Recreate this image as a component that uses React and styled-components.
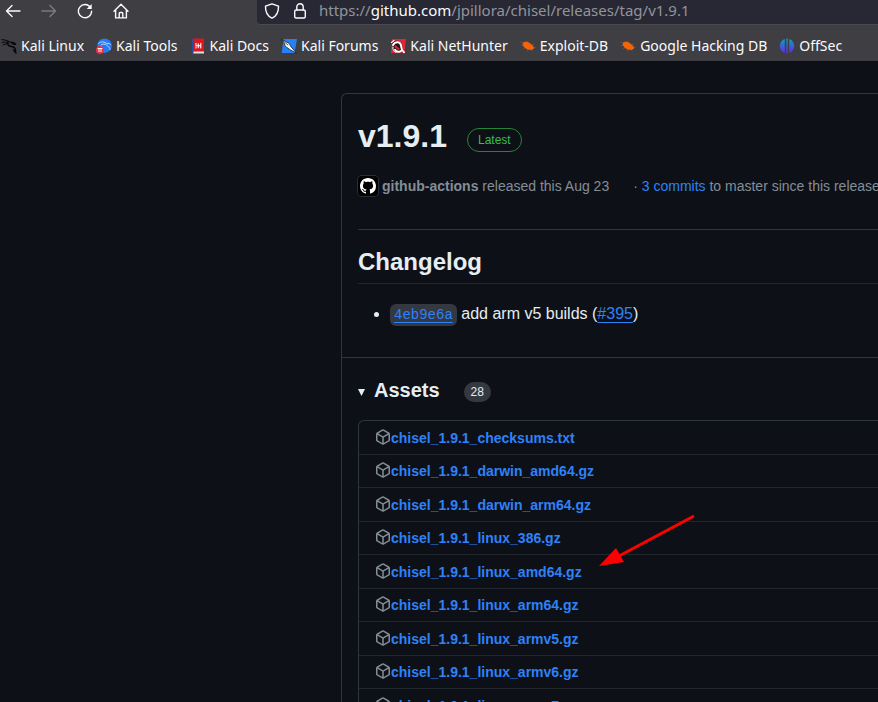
import React from "react";
import styled, { createGlobalStyle } from "styled-components";

const color = {
  chrome: "#3e3e43",
  urlBar: "#272834",
  page: "#0d1117",
  border: "#30363d",
  borderMuted: "#21262d",
  text: "#e6edf3",
  muted: "#848d97",
  link: "#2f81f7",
  green: "#3fb950",
};

const GlobalStyle = createGlobalStyle`
  * { box-sizing: border-box; }
  html, body { margin: 0; background: ${color.page}; }
  body { overflow: hidden; }
  a { color: inherit; text-decoration: none; }
  button { font: inherit; color: inherit; background: none; border: 0; padding: 0; }
  h1, h2, h3, p, ul { margin: 0; padding: 0; }
`;

const Window = styled.div`
  display: flex;
  flex-direction: column;
  height: 100vh;
  overflow: hidden;
  color: ${color.text};
  font-family: "Liberation Sans", Arial, sans-serif;
`;

const Chrome = styled.header`
  flex: none;
  background: ${color.chrome};
  color: #fbfbfe;
  font-family: "Noto Sans", sans-serif;
  font-size: 15px;
  line-height: 20px;
  border-bottom: 1px solid #0b0b10;
`;

const Toolbar = styled.div`
  display: flex;
  height: 25px;
`;

const NavButtons = styled.nav`
  display: flex;
  flex: none;
  width: 257px;
  gap: 18px;
  padding-left: 4px;
`;

const NavButton = styled.button`
  display: grid;
  place-items: center;
  width: 18px;
  height: 22px;
  color: ${(p) => (p.disabled ? "#7c7c80" : "#fbfbfe")};
`;

const UrlBar = styled.div`
  display: flex;
  flex: 1;
  align-items: flex-start;
  gap: 10px;
  padding-left: 6px;
  min-width: 0;
  background: ${color.urlBar};
  border-bottom: 1px solid #4a4a50;
  border-bottom-left-radius: 4px;
`;

const UrlIcon = styled.span`
  display: grid;
  place-items: center;
  width: 18px;
  height: 21px;
`;

const Url = styled.div`
  font-size: 15px;
  white-space: nowrap;
  color: #93949b;
`;

const Host = styled.span`
  color: #fbfbfe;
`;

const Bookmarks = styled.nav`
  display: flex;
  gap: 12px;
  padding: 11px 0 5px 1px;
  white-space: nowrap;
`;

const Bookmark = styled.a`
  display: flex;
  align-items: center;
  gap: 4px;
  font-size: 14px;
`;

const Page = styled.main`
  flex: 1;
  min-height: 0;
  padding: 31px 0 0 341px;
`;

const Release = styled.section`
  border: 1px solid ${color.border};
  border-right: 0;
  border-top-left-radius: 6px;
  white-space: nowrap;
`;

const ReleaseBody = styled.div`
  padding: 18px 0 30px 16px;
`;

const TitleRow = styled.div`
  display: flex;
  align-items: center;
  gap: 20px;
`;

const Title = styled.h1`
  font-size: 32px;
  line-height: 48px;
`;

const Latest = styled.span`
  margin-top: 8px;
  padding: 0 10px;
  border: 1px solid #238636;
  border-radius: 12px;
  color: ${color.green};
  font-size: 12px;
  line-height: 22px;
`;

const Meta = styled.div`
  display: flex;
  align-items: center;
  gap: 24px;
  padding: 14px 0 31px;
  border-bottom: 1px solid ${color.border};
  color: ${color.muted};
  font-size: 14px;
  line-height: 24px;
`;

const Author = styled.div`
  display: flex;
  align-items: center;
  gap: 4px;
`;

const AuthorLink = styled.a`
  font-weight: 700;
`;

const Avatar = styled.svg`
  display: block;
  width: 20px;
  height: 20px;
  border-radius: 4px;
  box-shadow: 0 0 0 1px #2b2e33;
`;

const TextLink = styled.a`
  color: ${color.link};
  text-decoration: ${(p) => (p.$underline ? "underline" : "none")};
  text-underline-offset: 3px;
`;

const Heading = styled.h2`
  margin-top: 16px;
  padding-bottom: 6px;
  border-bottom: 1px solid ${color.borderMuted};
  font-size: 24px;
  line-height: 31px;
`;

const Changes = styled.ul`
  margin-top: 18px;
  padding-left: 32px;
  font-size: 16px;
  line-height: 24px;
`;

const Commit = styled.code`
  padding: 3px 4px;
  border-radius: 6px;
  background: #343941;
  font-family: "Liberation Mono", monospace;
  font-size: 14px;
`;

const Assets = styled.section`
  padding: 19px 0 0 16px;
  border-top: 1px solid ${color.border};
`;

const AssetsSummary = styled.button`
  display: flex;
  align-items: center;
  color: ${color.text};
`;

const Caret = styled.svg`
  width: 7px;
  height: 7px;
  margin-top: 5px;
  margin-right: 9px;
`;

const AssetsTitle = styled.h3`
  font-size: 20px;
  line-height: 26px;
`;

const Counter = styled.span`
  margin-top: 3px;
  margin-left: 24px;
  padding: 0 7px;
  border-radius: 10px;
  background: #343941;
  font-size: 12px;
  line-height: 20px;
`;

const AssetList = styled.ul`
  display: grid;
  grid-template-rows: 33px;
  grid-auto-rows: 33px 34px;
  margin-top: 17px;
  border: 1px solid ${color.border};
  border-right: 0;
  border-top-left-radius: 6px;
  list-style: none;
`;

const AssetRow = styled.li`
  display: flex;
  align-items: center;
  padding-left: 16px;
  font-size: 14px;
  font-weight: 700;
  line-height: 20px;

  & + & {
    border-top: 1px solid ${color.borderMuted};
  }
`;

const PackageIcon = styled.svg`
  flex: none;
  width: 16px;
  height: 16px;
  margin-bottom: 2px;
  fill: ${color.muted};
`;

const Arrow = styled.svg`
  position: absolute;
  top: 512px;
  left: 598px;
  width: 100px;
  height: 58px;
  pointer-events: none;
`;

function Icon({ size = 16, children, ...rest }) {
  return (
    <svg width={size} height={size} viewBox="0 0 16 16" fill="none" stroke="currentColor"
      strokeWidth="1.4" strokeLinecap="round" strokeLinejoin="round" aria-hidden="true" {...rest}>
      {children}
    </svg>
  );
}

const BackIcon = () => <Icon><path d="M15 8H1.5M7 2.5 1.5 8 7 13.5" /></Icon>;
const ForwardIcon = () => <Icon><path d="M1 8h13.500M9 2.500 14.500 8 9 13.500" /></Icon>;
const ReloadIcon = () => (
  <Icon>
    <path d="M13.500 4.500A6.600 6.600 0 1 0 14.600 8.300" />
    <path d="M14.700 1v5H9.700z" fill="currentColor" stroke="none" />
  </Icon>
);
const HomeIcon = () => (
  <Icon>
    <path d="M1 8.300 8 1.300l7 7M2.600 7v7.900h10.800V7M6.200 14.700V10.500a1 1 0 0 1 1-1h1.600a1 1 0 0 1 1 1v4.200" />
  </Icon>
);
const ShieldIcon = () => (
  <Icon><path d="M8 .8 14.500 3.200c.2 5.600-1.500 9.600-6.500 12C3 12.800 1.300 8.800 1.500 3.200z" /></Icon>
);
const LockIcon = () => (
  <Icon><rect x="2.700" y="7" width="10.600" height="8" rx="1.500" /><path d="M4.800 7V4a3.200 3.200 0 0 1 6.400 0v3" /></Icon>
);

const DragonIcon = () => (
  <Icon stroke="#08080a">
    <path d="M.8 1.600C5 2 8 2.800 10 4.800M1 4.500c2.500-.7 4.500-.5 6 .5M2 7c1.500-1 3-1.200 5-1" strokeWidth="1" />
    <path d="M7 3.500c-1 3 .5 4.700 3.500 5 3 .3 4.200 1.800 4 5.500M9.500 4.500c2-.3 3.500 0 5 1.800l-2.500-.3" strokeWidth="1.600" />
    <path d="m12.500 12 2.500 3" />
  </Icon>
);
const ToolsIcon = () => (
  <Icon stroke="none">
    <circle cx="8.500" cy="7.700" r="7.300" fill="#277af4" />
    <path d="M2.500 5.500C5 3 8.500 3.500 11 5.800M5 7c2-1.500 4-1 5.500 0 1.200 1.500 3 1 3.500 4.500M11 5.500c1.500-.6 2.500-.1 3.500 1" stroke="#b9d7ff" strokeWidth="1" />
    <circle cx="3.900" cy="12" r="3.900" fill="#e8323d" />
    <path d="M2 10.500h4M3 10.500v3.200M5 10.500v3.200" stroke="#fff" strokeWidth=".9" />
  </Icon>
);
const DocsIcon = () => (
  <Icon stroke="none">
    <path d="M3 13h11v2.500H3z" fill="#e0e0e0" />
    <path d="M2.500.500H14V13.500H2.500z" fill="#dc1620" />
    <path d="M2 1 3.500.500v13L3.500 15.500 2 14.800z" fill="#1e50a0" />
    <path d="M6 5.200v2.600h4.800v2.200M10.800 5.400v1.300M6 9v1M8.300 5.700v4" stroke="#fff" strokeWidth="1.100" />
  </Icon>
);
const ForumsIcon = () => (
  <Icon stroke="none">
    <path d="M2.500 1H16l-2.500 14H.8z" fill="#2582f4" />
    <path d="m0 1 4.500 2.500 3.500 1.800 2.200 3.700 5.300 6.200-5.700-3-5.300-3.700L3 5z" fill="#fff" stroke="#171b25" strokeWidth=".8" />
    <path d="m1 2 6 5" stroke="#222733" strokeWidth=".8" />
  </Icon>
);
const NetHunterIcon = () => (
  <Icon stroke="none">
    <path d="M2 1h14l-1.500 14H1z" fill="#df2636" />
    <path d="M1 5c4-4 10-2.500 11 1.500.8 3.500-1 4 2.500 7.500L5 14.500C2 13 1 9 3.500 7z" fill="#17171c" />
    <path d="M3 7c2.500-4 7-3.500 8 .2.800 3-.5 4.300 3 7M5 11.800c1.500 2.500 4.500 2.500 6 1.200" stroke="#fff" strokeWidth="2" />
    <path d="M1.500 4.500 4 2.500M3 9c-.5 2 .5 4.500 3 5.300" stroke="#fff" strokeWidth="1.200" />
    <path d="M5.500 8.500 8.500 11" stroke="#df2636" strokeWidth="2.200" />
  </Icon>
);
const BugIcon = () => (
  <Icon stroke="#b9551c" strokeWidth=".6">
    <path d="m1 4 3 2M1.500 7.500H5M3.500 10.500 6 9M8 11l-.5 2M11 11.500l1 1.500M8 5l-.5-1.500M12 7l2-1M13 9.500l2.500-.3" />
    <path d="M2.800 5c2-2 5-1.200 7.200.2 2.300 1.500 4 3.200 4 5.200-1.500 2-6 1.500-8.300 0C3.800 9.200 2.300 7 2.800 5z" fill="#f2640c" stroke="none" />
  </Icon>
);
const OffSecIcon = () => (
  <Icon stroke="none">
    <defs>
      <linearGradient id="offsec" x1="0" y1="0" x2="0" y2="1">
        <stop offset="0" stopColor="#08a5bd" /><stop offset="1" stopColor="#6624e8" />
      </linearGradient>
    </defs>
    <path d="M5.800 1v14C2.800 14 .8 11.300.8 8S2.800 2 5.800 1zM10.200 1v14c3-1 5-3.700 5-7s-2-6-5-7zM7.300.5h1.400v15H7.300z" fill="url(#offsec)" />
  </Icon>
);

const bookmarks = [
  ["Kali Linux", DragonIcon],
  ["Kali Tools", ToolsIcon],
  ["Kali Docs", DocsIcon],
  ["Kali Forums", ForumsIcon],
  ["Kali NetHunter", NetHunterIcon],
  ["Exploit-DB", BugIcon],
  ["Google Hacking DB", BugIcon],
  ["OffSec", OffSecIcon],
];

const assets = [
  "chisel_1.9.1_checksums.txt",
  "chisel_1.9.1_darwin_amd64.gz",
  "chisel_1.9.1_darwin_arm64.gz",
  "chisel_1.9.1_linux_386.gz",
  "chisel_1.9.1_linux_amd64.gz",
  "chisel_1.9.1_linux_arm64.gz",
  "chisel_1.9.1_linux_armv5.gz",
  "chisel_1.9.1_linux_armv6.gz",
  "chisel_1.9.1_linux_armv7.gz",
];

export default function App() {
  return (
    <Window>
      <GlobalStyle />
      <Chrome>
        <Toolbar>
          <NavButtons aria-label="Browser">
            <NavButton aria-label="Back"><BackIcon /></NavButton>
            <NavButton aria-label="Forward" disabled><ForwardIcon /></NavButton>
            <NavButton aria-label="Reload"><ReloadIcon /></NavButton>
            <NavButton aria-label="Home"><HomeIcon /></NavButton>
          </NavButtons>
          <UrlBar>
            <UrlIcon><ShieldIcon /></UrlIcon>
            <UrlIcon><LockIcon /></UrlIcon>
            <Url>https://<Host>github.com</Host>/jpillora/chisel/releases/tag/v1.9.1</Url>
          </UrlBar>
        </Toolbar>
        <Bookmarks aria-label="Bookmarks">
          {bookmarks.map(([label, Glyph]) => (
            <Bookmark key={label} href="#"><Glyph />{label}</Bookmark>
          ))}
        </Bookmarks>
      </Chrome>

      <Page>
        <Release>
          <ReleaseBody>
            <TitleRow>
              <Title>v1.9.1</Title>
              <Latest>Latest</Latest>
            </TitleRow>
            <Meta>
              <Author>
                <Avatar viewBox="0 0 20 20" aria-hidden="true">
                  <rect width="20" height="20" fill="#000" />
                  <path transform="translate(2 2)" fill="#fff" d="M8 0C3.580 0 0 3.580 0 8c0 3.540 2.290 6.530 5.470 7.590.4.070.55-.17.55-.38 0-.19-.01-.82-.01-1.490-2.010.37-2.530-.49-2.690-.94-.09-.23-.48-.94-.82-1.130-.28-.15-.68-.52-.01-.53.63-.01 1.080.58 1.230.82.72 1.210 1.870.87 2.330.66.07-.52.28-.87.51-1.070-1.780-.2-3.640-.89-3.640-3.950 0-.87.31-1.590.82-2.150-.08-.2-.36-1.020.08-2.120 0 0 .67-.21 2.200.82.64-.18 1.320-.27 2-.27s1.360.09 2 .27c1.530-1.040 2.200-.82 2.200-.82.44 1.100.16 1.920.08 2.120.51.56.82 1.270.82 2.150 0 3.070-1.870 3.750-3.650 3.950.29.25.54.73.54 1.480 0 1.070-.01 1.930-.01 2.200 0 .21.15.46.55.38A8.010 8.010 0 0 0 16 8c0-4.420-3.580-8-8-8z" />
                </Avatar>
                <span><AuthorLink href="#">github-actions</AuthorLink> released this Aug 23</span>
              </Author>
              <span>· <TextLink href="#">3 commits</TextLink> to master since this release</span>
            </Meta>
            <Heading>Changelog</Heading>
            <Changes>
              <li>
                <Commit><TextLink href="#" $underline>4eb9e6a</TextLink></Commit> add arm v5 builds (<TextLink href="#" $underline>#395</TextLink>)
              </li>
            </Changes>
          </ReleaseBody>
          <Assets>
            <AssetsSummary aria-expanded="true">
              <Caret viewBox="0 0 7 7" aria-hidden="true"><path d="M0 0h7L3.500 7z" fill="currentColor" /></Caret>
              <AssetsTitle>Assets</AssetsTitle>
              <Counter>28</Counter>
            </AssetsSummary>
            <AssetList>
              {assets.map((name) => (
                <AssetRow key={name}>
                  <PackageIcon viewBox="0 0 16 16" aria-hidden="true">
                    <path d="m8.878.392 5.250 3.045c.54.314.872.89.872 1.514v6.098a1.750 1.750 0 0 1-.872 1.514l-5.250 3.045a1.750 1.750 0 0 1-1.756 0l-5.250-3.045A1.750 1.750 0 0 1 1 11.049V4.951c0-.624.332-1.201.872-1.514L7.122.392a1.750 1.750 0 0 1 1.756 0ZM7.875 1.690l-4.630 2.685L8 7.133l4.755-2.758-4.630-2.685a.248.248 0 0 0-.25 0ZM2.500 5.677v5.372c0 .09.047.171.125.216l4.625 2.683V8.432Zm6.250 8.271 4.625-2.683a.25.25 0 0 0 .125-.216V5.677L8.750 8.432Z" />
                  </PackageIcon>
                  <TextLink href="#">{name}</TextLink>
                </AssetRow>
              ))}
            </AssetList>
          </Assets>
        </Release>
      </Page>

      <Arrow viewBox="0 0 100 58" aria-hidden="true">
        <path d="M96 4 21 44" stroke="#f00" strokeWidth="3" />
        <path d="M1 54 18 36l8 14z" fill="#f00" />
      </Arrow>
    </Window>
  );
}
